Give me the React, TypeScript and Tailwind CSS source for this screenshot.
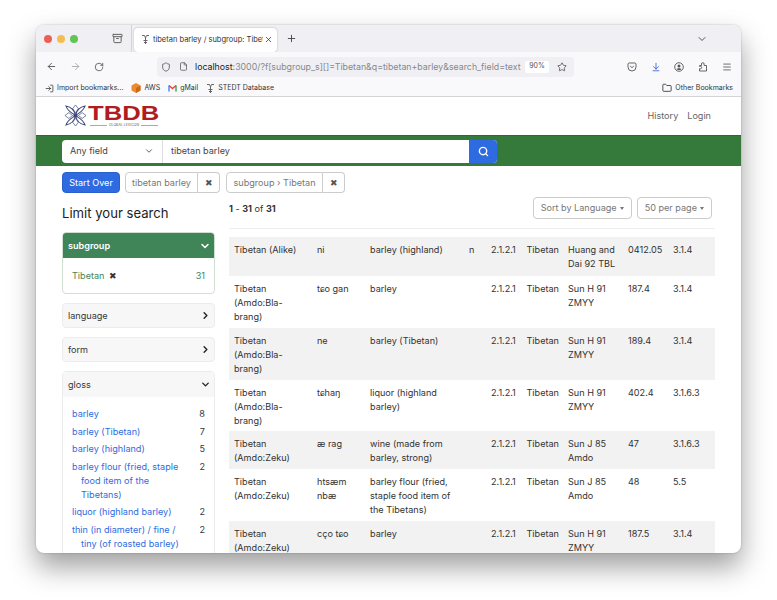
import { ChevronDown, ChevronRight, Search, X, Plus, ArrowLeft, ArrowRight, RotateCw, Shield, File, Star, ArrowDownToLine, Menu, Folder, Archive, LogIn } from "lucide-react";

const rows = [
  { h: "h-[39px]", c: ["Tibetan (Alike)", "ni", "barley (highland)", "n", "2.1.2.1", "Tibetan", "Huang and Dai 92 TBL", "0412.05", "3.1.4"] },
  { h: "h-[52px]", c: ["Tibetan (Amdo:Bla-brang)", "tɕo gan", "barley", "", "2.1.2.1", "Tibetan", "Sun H 91 ZMYY", "187.4", "3.1.4"] },
  { h: "h-[52px]", c: ["Tibetan (Amdo:Bla-brang)", "ne", "barley (Tibetan)", "", "2.1.2.1", "Tibetan", "Sun H 91 ZMYY", "189.4", "3.1.4"] },
  { h: "h-[51px]", c: ["Tibetan (Amdo:Bla-brang)", "tɕhaŋ", "liquor (highland barley)", "", "2.1.2.1", "Tibetan", "Sun H 91 ZMYY", "402.4", "3.1.6.3"] },
  { h: "h-[38px]", c: ["Tibetan (Amdo:Zeku)", "æ rag", "wine (made from barley, strong)", "", "2.1.2.1", "Tibetan", "Sun J 85 Amdo", "47", "3.1.6.3"] },
  { h: "h-[52px]", c: ["Tibetan (Amdo:Zeku)", "htsæm nbæ", "barley flour (fried, staple food item of the Tibetans)", "", "2.1.2.1", "Tibetan", "Sun J 85 Amdo", "48", "5.5"] },
  { h: "h-[52px]", c: ["Tibetan (Amdo:Zeku)", "cço tɕo", "barley", "", "2.1.2.1", "Tibetan", "Sun H 91 ZMYY", "187.5", "3.1.4"] },
];
const widths = ["w-[83px] pr-[11px]", "w-[53px] pr-[12px]", "w-[99px] pr-[11px]", "w-[22px]", "w-[35.5px]", "w-[41.5px]", "w-[60px] pr-[2px]", "w-[45px]", "w-[37px]"];

const gloss = [
  ["barley", "8"],
  ["barley (Tibetan)", "7"],
  ["barley (highland)", "5"],
  ["barley flour (fried, staple food item of the Tibetans)", "2"],
  ["liquor (highland barley)", "2"],
  ["thin (in diameter) / fine / tiny (of roasted barley)", "2"],
];

function Favicon() {
  return (
    <svg width="9" height="11" viewBox="0 0 9 11" fill="none" stroke="#666" strokeWidth="1" className="shrink-0">
      <path d="M1 1.5h2.5L4.5 4l1-2.5H8M4.5 4v6M2.5 6.5h4M3 8.5h3" />
    </svg>
  );
}

function Caret() {
  return <span className="w-0 h-0 border-x-[2.5px] border-t-[3px] border-x-transparent border-t-[#777] shrink-0" />;
}

function Logo() {
  return (
    <div className="flex items-start gap-[1px]">
      <svg width="23" height="23" viewBox="0 0 24 24" fill="none" stroke="#3d4a7a" strokeWidth="1.1">
        <path d="M12 12C8 9 4 8 2 2c6 1 9 5 10 10zM12 12c4-3 8-4 10-10-6 1-9 5-10 10zM12 12c-4 3-8 4-10 10 6-1 9-5 10-10zM12 12c4 3 8 4 10 10-6-1-9-5-10-10z" />
        <path d="M12 1l3 4-3 4-3-4zM12 15l3 4-3 4-3-4zM1 12l4-3 4 3-4 3zM15 12l4-3 4 3-4 3z" strokeWidth="0.7" />
        <circle cx="12" cy="12" r="1.6" fill="#3d4a7a" />
      </svg>
      <div className="flex flex-col w-[71px]">
        <span className="block text-[21px] leading-[18px] font-bold font-['Liberation_Sans'] text-[#b01c1f] origin-left scale-x-[1.22] whitespace-nowrap">TBDB</span>
        <div className="flex items-center gap-[2px] w-[68px] ml-[2px] mt-[1px]">
          <span className="flex-1 h-px bg-[#aaa]" />
          <span className="text-[3.5px] leading-[5px] text-[#666] whitespace-nowrap">GLOBAL LEXICON</span>
          <span className="flex-1 h-px bg-[#aaa]" />
        </div>
      </div>
    </div>
  );
}

function Facet({ label }: { label: string }) {
  return (
    <div className="h-[25px] rounded-[4px] border border-[#ececec] bg-[#f7f7f7] flex items-center justify-between pl-[5px] pr-[3px] mb-[9px]">
      <span>{label}</span>
      <ChevronRight size={11} strokeWidth={3} className="text-[#222]" />
    </div>
  );
}

export default function App() {
  return (
    <div className="w-[777px] h-[600px] bg-white overflow-hidden pt-[25px] pl-[36px] font-['Inter','Liberation_Sans',sans-serif] text-[9.1px] text-[#333a40]">
      <div className="w-[705px] h-[528px] rounded-[8px] overflow-hidden bg-white flex flex-col shadow-[0_14px_28px_rgba(0,0,0,0.38),0_0_2px_rgba(0,0,0,0.25)]">
        {/* tab bar */}
        <div className="h-[27px] shrink-0 bg-[#f0f0f4] flex items-center">
          <div className="flex gap-[5px] pl-[8px] w-[76px] shrink-0">
            <span className="w-[8px] h-[8px] rounded-full bg-[#ec5f57]" />
            <span className="w-[8px] h-[8px] rounded-full bg-[#f4bd4f]" />
            <span className="w-[8px] h-[8px] rounded-full bg-[#61c454]" />
          </div>
          <Archive size={11} className="text-[#555] shrink-0" />
          <div className="ml-[8px] w-px h-[27px] bg-[#d4d4d8] shrink-0" />
          <div className="ml-[2px] mt-[2px] h-[24px] w-[143px] bg-white rounded-[4px] shadow-[0_0_2px_rgba(0,0,0,0.3)] flex items-center pl-[7px] pr-[4px] text-[7.5px] text-[#333] shrink-0">
            <span className="mr-[3px]"><Favicon /></span>
            <span className="whitespace-nowrap overflow-hidden flex-1">tibetan barley / subgroup: Tibet</span>
            <X size={9} className="ml-[1px] shrink-0" />
          </div>
          <Plus size={11} className="ml-[9px] text-[#444]" />
          <ChevronDown size={12} className="ml-auto mr-[33px] text-[#555]" />
        </div>
        {/* toolbar */}
        <div className="h-[28px] shrink-0 bg-[#f9f9fb] flex items-center pt-[1px] text-[#555]">
          <ArrowLeft size={11} className="ml-[10px] shrink-0" />
          <ArrowRight size={11} className="ml-[13px] text-[#aaa] shrink-0" />
          <RotateCw size={10} className="ml-[13px] shrink-0" />
          <div className="ml-[53px] h-[20px] w-[417px] shrink-0 rounded-[4px] bg-[#f0f0f4] flex items-center pl-[4px]">
            <Shield size={10} className="shrink-0" />
            <File size={9} className="ml-[8px] shrink-0" />
            <span className="ml-[7px] text-[8.8px] text-[#888] whitespace-nowrap w-[327px] block truncate [text-overflow:clip]"><span className="text-[#222]">localhost</span>:3000/?f[subgroup_s][]=Tibetan&amp;q=tibetan+barley&amp;search_field=text</span>
            <span className="ml-[3px] h-[12px] w-[24px] bg-white rounded-[2px] text-[7px] flex items-center justify-center shrink-0">90%</span>
            <Star size={10} className="ml-[8px] shrink-0" />
          </div>
          <div className="flex items-center ml-[53px] gap-[13.5px]">
            <svg width="10" height="10" viewBox="0 0 10 10" fill="none" stroke="#555" strokeWidth="0.9"><path d="M1 2.2C1 1.5 1.5 1 2.2 1h5.6C8.5 1 9 1.5 9 2.2V5a4 4 0 0 1-8 0z" /><path d="M3.2 4l1.8 1.7L6.8 4" /></svg>
            <ArrowDownToLine size={10} className="text-[#3a5bd9]" />
            <svg width="10" height="10" viewBox="0 0 10 10" fill="#555"><circle cx="5" cy="5" r="4.3" fill="none" stroke="#555" strokeWidth="0.9" /><circle cx="5" cy="3.9" r="1.5" /><path d="M2.6 7.2C3 6 7 6 7.4 7.2 6.6 8.1 3.4 8.1 2.6 7.2z" /></svg>
            <svg width="11" height="11" viewBox="0 0 11 11" fill="none" stroke="#555" strokeWidth="0.9"><path d="M1.5 4.5h2V3a1.3 1.3 0 0 1 2.6 0v1.5h2.4v5.5h-7V7.8h1a1.2 1.2 0 0 0 0-2.4h-1z" /></svg>
            <Menu size={10} />
          </div>
        </div>
        {/* bookmarks */}
        <div className="h-[17px] shrink-0 bg-[#f9f9fb] border-b border-[#d4d4d8] flex items-center text-[7px] text-[#333] pl-[9px] whitespace-nowrap">
          <LogIn size={9} className="mr-[3px] shrink-0" />
          <span>Import bookmarks...</span>
          <svg width="10" height="10" viewBox="0 0 10 10" className="ml-[8px] mr-[3px] shrink-0"><path d="M5 0l4.5 2.5v5L5 10 .5 7.5v-5z" fill="#ec8b2e" /><path d="M5 5l4.5-2.5v5L5 10z" fill="#c96a17" /></svg>
          <span>AWS</span>
          <svg width="9" height="8" viewBox="0 0 9 8" fill="none" className="ml-[8px] mr-[3px] shrink-0" strokeWidth="1.4"><path d="M1 7.5V1.5" stroke="#4285f4" /><path d="M8 7.5V1.5" stroke="#34a853" /><path d="M1 1.5l3.5 3 3.5-3" stroke="#ea4335" /></svg>
          <span>gMail</span>
          <span className="ml-[8px] mr-[3px]"><Favicon /></span>
          <span>STEDT Database</span>
          <Folder size={10} className="ml-auto mr-[3px] shrink-0" />
          <span className="mr-[8px]">Other Bookmarks</span>
        </div>
        {/* app nav */}
        <div className="h-[38px] shrink-0 flex items-center justify-between pl-[28px] pr-[30px] text-[#666]">
          <Logo />
          <div className="flex gap-[9px]"><span>History</span><span>Login</span></div>
        </div>
        {/* search bar */}
        <div className="h-[31px] shrink-0 bg-[#367a3b] border-t border-[#2c6a30] flex items-center pl-[26px]">
          <div className="flex h-[23px] w-[435px] rounded-[4px] overflow-hidden bg-white text-[#444]">
            <div className="w-[101px] flex items-center justify-between px-[8px] border-r border-[#ddd]">
              <span>Any field</span>
              <ChevronDown size={10} />
            </div>
            <div className="flex-1 flex items-center pl-[8px]">tibetan barley</div>
            <div className="w-[28px] bg-[#2f6be0] flex items-center justify-center text-white">
              <Search size={11} strokeWidth={3} />
            </div>
          </div>
        </div>
        {/* body */}
        <div className="flex-1 min-h-0 overflow-hidden pl-[26px] pt-[6px]">
          <div className="flex items-center h-[21px]">
            <span className="h-[21px] w-[58px] justify-center flex items-center rounded-[4px] bg-[#2f6be0] text-white border border-[#2a5fcc]">Start Over</span>
            <span className="ml-[5px] h-[21px] w-[73px] justify-center flex items-center rounded-l-[4px] border border-[#ccc] text-[#777]">tibetan barley</span>
            <span className="h-[21px] w-[22px] flex items-center justify-center rounded-r-[4px] border border-l-0 border-[#ccc] text-[#555]">✖</span>
            <span className="ml-[6px] h-[21px] w-[97px] justify-center flex items-center rounded-l-[4px] border border-[#ccc] text-[#777]">subgroup › Tibetan</span>
            <span className="h-[21px] w-[22px] flex items-center justify-center rounded-r-[4px] border border-l-0 border-[#ccc] text-[#555]">✖</span>
          </div>
          <div className="flex mt-[4px]">
            {/* sidebar */}
            <div className="w-[153px] shrink-0">
              <div className="text-[13.1px] leading-[20px] text-[#222] mt-[6px] mb-[9px]">Limit your search</div>
              <div className="rounded-[4px] border border-[#cfe0d2] mb-[9px]">
                <div className="h-[25px] bg-[#3f8558] rounded-t-[3px] text-white font-semibold flex items-center justify-between pl-[5px] pr-[3px]">
                  <span>subgroup</span>
                  <ChevronDown size={12} strokeWidth={3} />
                </div>
                <div className="h-[35px] flex items-center justify-between px-[9px] text-[#3f8558]">
                  <span>Tibetan <span className="text-[#333] ml-[2px]">✖</span></span>
                  <span>31</span>
                </div>
              </div>
              <Facet label="language" />
              <Facet label="form" />
              <div className="rounded-[4px] border border-[#ececec]">
                <div className="h-[25px] bg-[#f7f7f7] flex items-center justify-between pl-[5px] pr-[3px]">
                  <span>gloss</span>
                  <ChevronDown size={11} strokeWidth={3} className="text-[#222]" />
                </div>
                <div className="pl-[9px] pr-[9px] pt-[10px]">
                  {gloss.map(([g, n]) => (
                    <div key={g} className="flex justify-between leading-[14px] mb-[3.6px]">
                      <span className="text-[#2f6be0] w-[115px] pl-[9px] -indent-[9px]">{g}</span>
                      <span>{n}</span>
                    </div>
                  ))}
                </div>
              </div>
            </div>
            {/* results */}
            <div className="ml-[14px] w-[486px] shrink-0">
              <div className="flex items-start justify-between h-[32px] border-b border-[#eeeeee] pr-[3px]">
                <span className="pt-[5px] text-[#333]"><b>1</b> - <b>31</b> of <b>31</b></span>
                <div className="flex gap-[5px] text-[#777]">
                  <span className="h-[22px] px-[7px] flex items-center gap-[3px] rounded-[4px] border border-[#ccc]">Sort by Language <Caret /></span>
                  <span className="h-[22px] px-[7px] flex items-center gap-[3px] rounded-[4px] border border-[#ccc]">50 per page <Caret /></span>
                </div>
              </div>
              <div className="mt-[8px]">
                {rows.map((r, i) => (
                  <div key={i} className={`flex pl-[5px] pt-[5.5px] leading-[14px] text-[#333] ${r.h} ${i % 2 === 0 ? "bg-[#f2f2f2]" : "bg-white"}`}>
                    {r.c.map((t, j) => (
                      <div key={j} className={`${widths[j]} shrink-0`}>{t}</div>
                    ))}
                  </div>
                ))}
              </div>
            </div>
          </div>
        </div>
      </div>
    </div>
  );
}
